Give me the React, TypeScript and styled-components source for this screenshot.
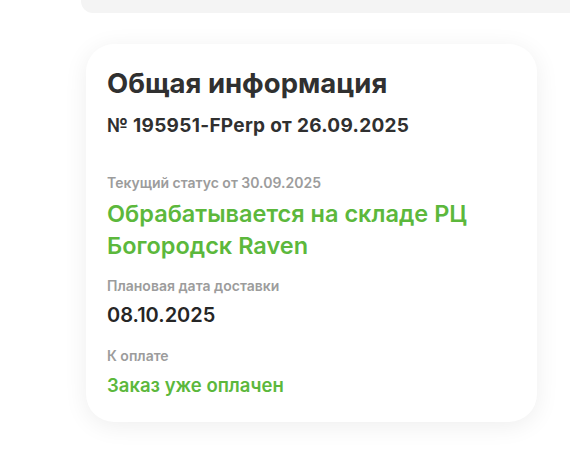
import React from "react";
import styled, { createGlobalStyle } from "styled-components";

const Global = createGlobalStyle`
  html, body { margin: 0; padding: 0; background: #ffffff; }
  body { font-family: Inter, "Noto Sans", sans-serif; }
`;

const Page = styled.div`
  width: 570px;
  height: 453px;
  overflow: hidden;
  display: flex;
  flex-direction: column;
`;

const TopBar = styled.div`
  margin-left: 81px;
  height: 13px;
  background: #f4f4f4;
  border-bottom-left-radius: 12px;
`;

const Card = styled.section`
  margin: 31px 0 0 86px;
  width: 451px;
  box-sizing: border-box;
  padding: 22px 21px 25px;
  background: #fff;
  border-radius: 28px;
  box-shadow: 0 4px 24px rgba(0, 0, 0, 0.07);
  display: flex;
  flex-direction: column;
  color: #303030;
`;

const Title = styled.h2`
  margin: 0;
  font-size: 27.5px;
  line-height: 34px;
  font-weight: 700;
`;

const OrderNo = styled.div`
  margin-top: 14px;
  font-size: 19px;
  line-height: 24px;
  font-weight: 700;
  letter-spacing: 0.3px;
`;

const Field = styled.div<{ $gap: number; $mt: number }>`
  margin-top: ${(p) => p.$mt}px;
  display: flex;
  flex-direction: column;
  gap: ${(p) => p.$gap}px;
`;

const Label = styled.div`
  font-size: 14px;
  line-height: 18px;
  font-weight: 600;
  color: #9c9c9c;
`;

const Value = styled.div<{ $green?: boolean; $size: number; $lh: number }>`
  font-size: ${(p) => p.$size}px;
  line-height: ${(p) => p.$lh}px;
  font-weight: 600;
  color: ${(p) => (p.$green ? "#5cb83c" : "#262626")};
`;

export default function App() {
  return (
    <Page>
      <Global />
      <TopBar />
      <Card>
        <Title>Общая информация</Title>
        <OrderNo>№ 195951-FPerp от 26.09.2025</OrderNo>
        <Field $mt={36} $gap={6}>
          <Label>Текущий статус от 30.09.2025</Label>
          <Value $green $size={23.5} $lh={32}>
            Обрабатывается на складе РЦ
            <br />
            Богородск Raven
          </Value>
        </Field>
        <Field $mt={15} $gap={8}>
          <Label>Плановая дата доставки</Label>
          <Value $size={20} $lh={24}>08.10.2025</Value>
        </Field>
        <Field $mt={20} $gap={8}>
          <Label>К оплате</Label>
          <Value $green $size={18.5} $lh={24}>Заказ уже оплачен</Value>
        </Field>
      </Card>
    </Page>
  );
}
